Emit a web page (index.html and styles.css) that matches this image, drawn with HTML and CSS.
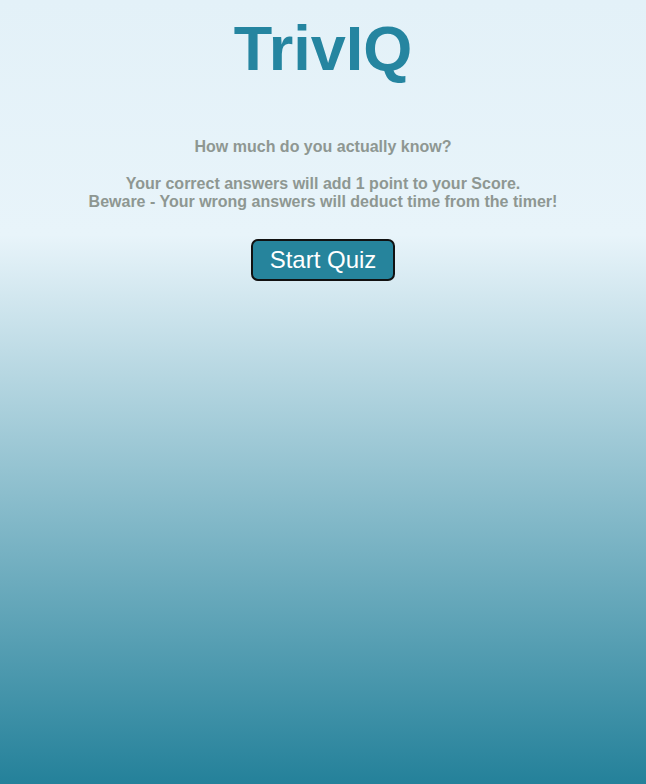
FILE: index.html
```html
<!DOCTYPE html>
<html lang="en">
<head>
<meta charset="utf-8">
<title>TrivIQ</title>
<link rel="stylesheet" href="styles.css">
</head>
<body>
<main class="page">
  <h1 class="title">TrivIQ</h1>
  <div class="intro">
    <p class="intro-line">How much do you actually know?</p>
    <p class="intro-line">Your correct answers will add 1 point to your Score.<br>Beware - Your wrong answers will deduct time from the timer!</p>
  </div>
  <button class="start-btn" type="button">Start Quiz</button>
</main>
</body>
</html>
```

FILE: styles.css
```css
html, body {
  margin: 0;
  padding: 0;
  height: 100%;
}

body {
  font-family: "Liberation Sans", Arial, sans-serif;
  background: linear-gradient(to bottom, #e3f1f8 0%, #e8f4fa 30%, #24819a 100%);
  min-height: 784px;
}

.page {
  display: flex;
  flex-direction: column;
  align-items: center;
  padding-top: 12px;
}

.title {
  margin: 0;
  font-size: 63px;
  font-weight: bold;
  color: #2585a0;
  line-height: 73px;
}

.intro {
  margin-top: 53px;
  text-align: center;
  color: #8e9792;
  font-size: 16px;
  font-weight: bold;
  line-height: 18.4px;
}

.intro-line {
  margin: 0 0 18.4px 0;
}

.intro-line:last-child {
  margin-bottom: 0;
}

.start-btn {
  margin-top: 27px;
  font-family: "Liberation Sans", Arial, sans-serif;
  font-size: 24px;
  line-height: 28px;
  color: #ffffff;
  background: #26849c;
  border: 2px solid #111;
  border-radius: 7px;
  padding: 5px 17px;
  cursor: pointer;
}
```
